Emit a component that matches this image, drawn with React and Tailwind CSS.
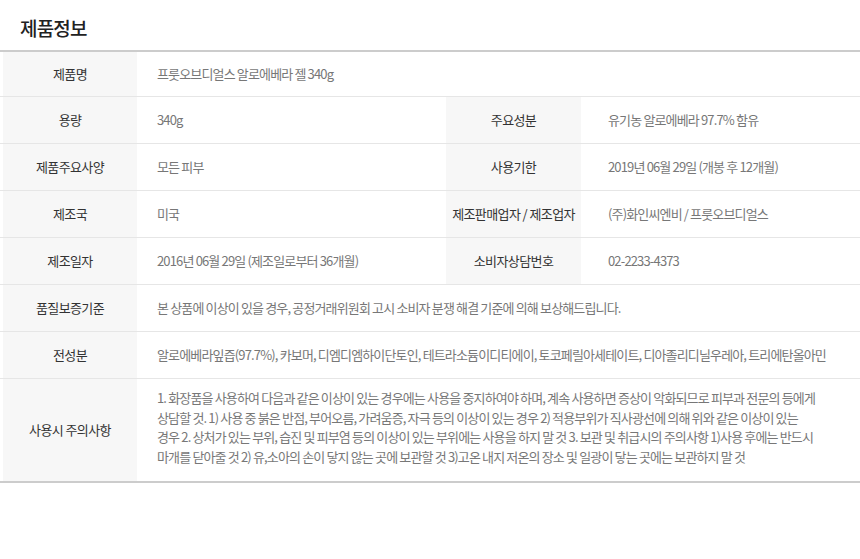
import React from "react";

function Label({ children, className = "" }) {
  return (
    <div className={"flex shrink-0 items-center justify-center bg-[#f7f7f7] text-[13px] tracking-[-0.6px] text-[#333] " + className}>
      {children}
    </div>
  );
}

function Value({ children, className = "" }) {
  return (
    <div className={"flex items-center text-[13px] tracking-[-0.85px] text-[#777] " + className}>
      {children}
    </div>
  );
}

function Row({ children, h = "h-[46px]" }) {
  return (
    <div className={"flex border-b border-[#e6e6e6] pl-[3px] " + h}>{children}</div>
  );
}

export default function App() {
  return (
    <div className="h-[559px] w-[860px] bg-white font-['Noto_Sans_CJK_KR',sans-serif]">
      <div className="flex h-[50px] items-center pl-5 pt-[6px]">
        <h1 className="text-[19px] font-medium tracking-[-0.8px] text-[#222]">제품정보</h1>
      </div>
      <div className="border-t-2 border-b-2 border-[#cccccc]">
        <Row h="h-[45px]">
          <Label className="w-[134px]">제품명</Label>
          <Value className="flex-1 pl-5">프룻오브디얼스 알로에베라 젤 340g</Value>
        </Row>
        <Row h="h-[47px]">
          <Label className="w-[134px]">용량</Label>
          <Value className="w-[309px] pl-5">340g</Value>
          <Label className="w-[135px]">주요성분</Label>
          <Value className="flex-1 pl-[27px]">유기농 알로에베라 97.7% 함유</Value>
        </Row>
        <Row h="h-[47px]">
          <Label className="w-[134px]">제품주요사양</Label>
          <Value className="w-[309px] pl-5">모든 피부</Value>
          <Label className="w-[135px]">사용기한</Label>
          <Value className="flex-1 pl-[27px]">2019년 06월 29일 (개봉 후 12개월)</Value>
        </Row>
        <Row h="h-[47px]">
          <Label className="w-[134px]">제조국</Label>
          <Value className="w-[309px] pl-5">미국</Value>
          <Label className="w-[135px]">제조판매업자 / 제조업자</Label>
          <Value className="flex-1 pl-[27px]">(주)화인씨엔비 / 프룻오브디얼스</Value>
        </Row>
        <Row h="h-[47px]">
          <Label className="w-[134px]">제조일자</Label>
          <Value className="w-[309px] pl-5">2016년 06월 29일 (제조일로부터 36개월)</Value>
          <Label className="w-[135px]">소비자상담번호</Label>
          <Value className="flex-1 pl-[27px]">02-2233-4373</Value>
        </Row>
        <Row h="h-[47px]">
          <Label className="w-[134px]">품질보증기준</Label>
          <Value className="flex-1 pl-5">본 상품에 이상이 있을 경우, 공정거래위원회 고시 소비자 분쟁 해결 기준에 의해 보상해드립니다.</Value>
        </Row>
        <Row h="h-[47px]">
          <Label className="w-[134px]">전성분</Label>
          <Value className="flex-1 pl-5">알로에베라잎즙(97.7%), 카보머, 디엠디엠하이단토인, 테트라소듐이디티에이, 토코페릴아세테이트, 디아졸리디닐우레아, 트리에탄올아민</Value>
        </Row>
        <div className="flex h-[102px] pl-[3px]">
          <Label className="w-[134px]">사용시 주의사항</Label>
          <Value className="flex-1 pb-[6px] pl-5 pr-6 leading-[19.5px]">
            <p>
              1. 화장품을 사용하여 다음과 같은 이상이 있는 경우에는 사용을 중지하여야 하며, 계속 사용하면 증상이 악화되므로 피부과 전문의 등에게<br />
              상담할 것. 1) 사용 중 붉은 반점, 부어오름, 가려움증, 자극 등의 이상이 있는 경우 2) 적용부위가 직사광선에 의해 위와 같은 이상이 있는<br />
              경우 2. 상처가 있는 부위, 습진 및 피부염 등의 이상이 있는 부위에는 사용을 하지 말 것 3. 보관 및 취급시의 주의사항 1)사용 후에는 반드시<br />
              마개를 닫아줄 것 2) 유,소아의 손이 닿지 않는 곳에 보관할 것 3)고온 내지 저온의 장소 및 일광이 닿는 곳에는 보관하지 말 것
            </p>
          </Value>
        </div>
      </div>
    </div>
  );
}
